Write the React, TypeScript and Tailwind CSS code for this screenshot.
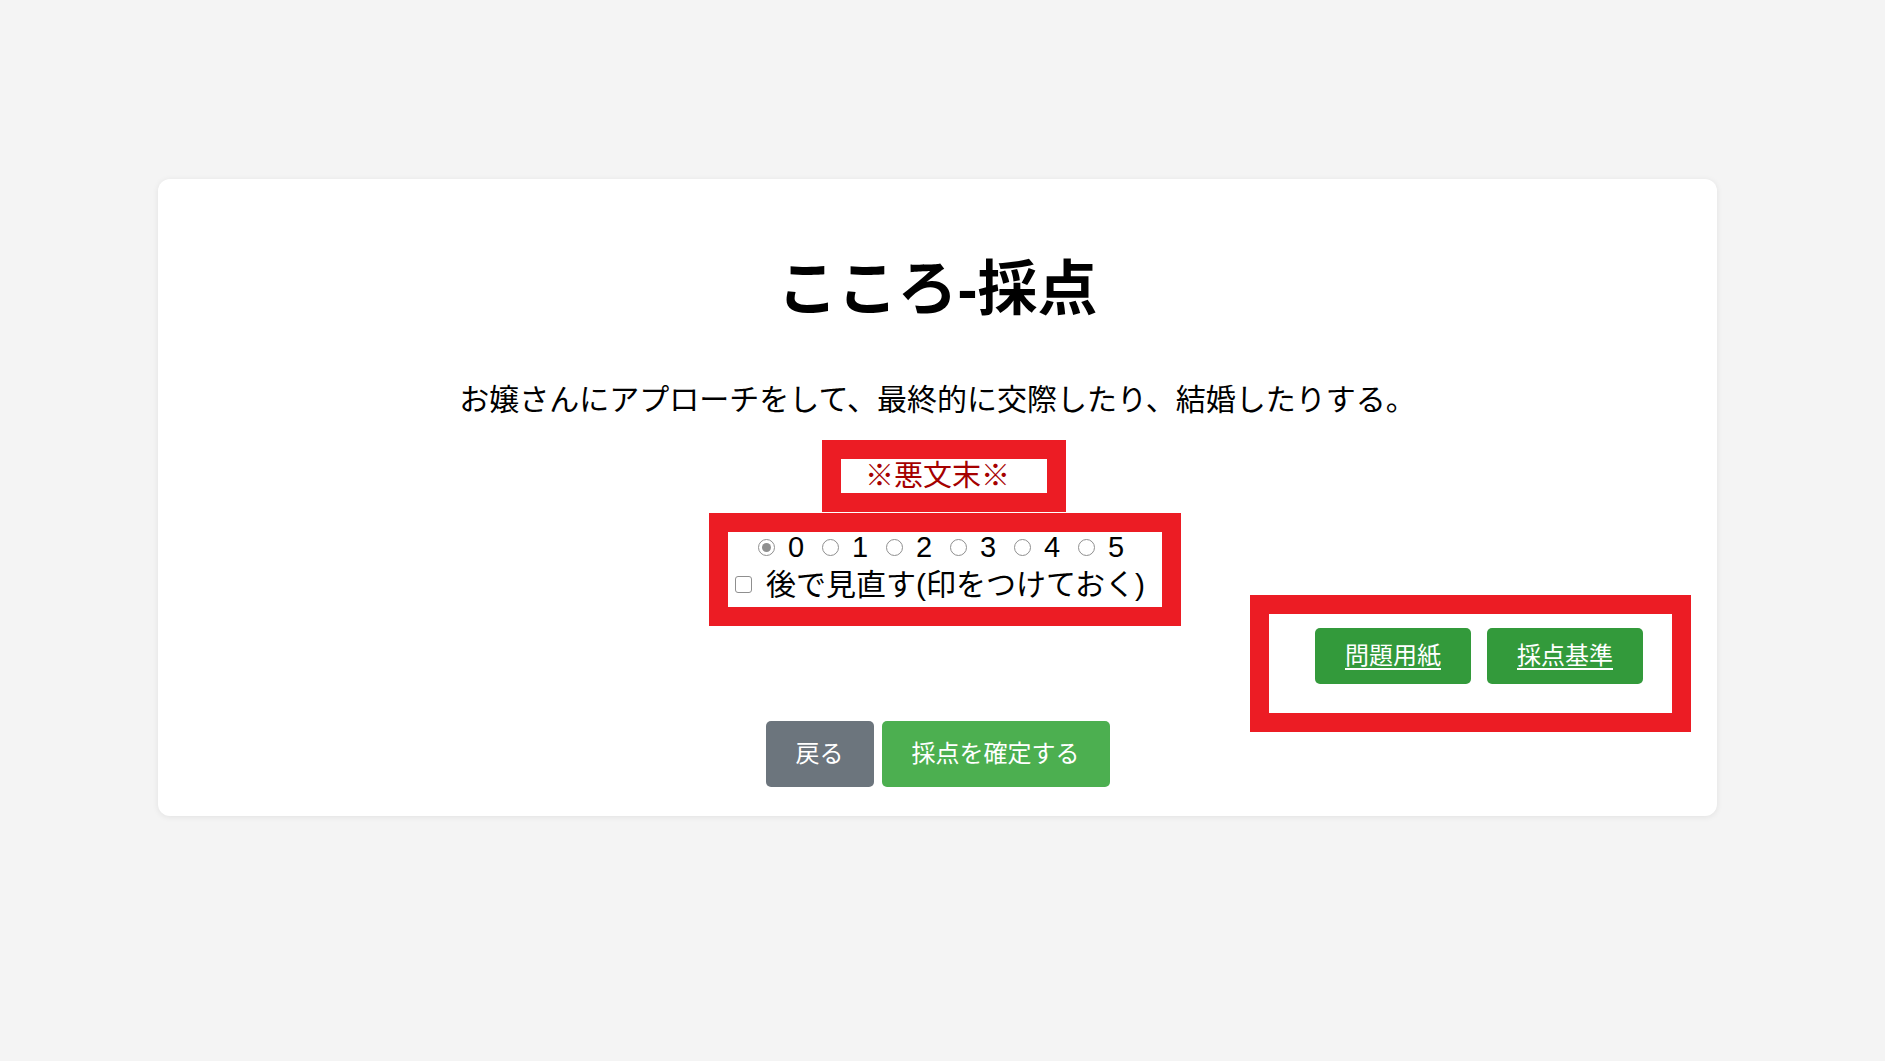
import { useState } from 'react';

const FONT = { fontFamily: '"Liberation Sans", "Noto Sans CJK JP", sans-serif' };

function Radio({ checked }: { checked: boolean }) {
  return (
    <span className="flex h-[17px] w-[17px] items-center justify-center rounded-full border border-[#8f8f8f] bg-white">
      {checked && <span className="h-[9px] w-[9px] rounded-full bg-[#8f8f8f]" />}
    </span>
  );
}

export default function App() {
  const [score, setScore] = useState(0);
  const [later, setLater] = useState(false);

  return (
    <div className="min-h-[1061px] bg-[#f4f4f4] pt-[179px] text-black" style={FONT}>
      <div className="ml-[158px] flex h-[637px] w-[1559px] flex-col items-center rounded-[12px] bg-white shadow-[0_1px_6px_rgba(0,0,0,0.08)]">
        {/* タイトル */}
        <h1 className="mt-[71px] text-[60px] font-bold leading-[80px]">こころ-採点</h1>

        <p className="mt-[49px] text-[30px] leading-[42px]">
          お嬢さんにアプローチをして、最終的に交際したり、結婚したりする。
        </p>

        {/* 悪文末 */}
        <div className="ml-[13px] mt-[19px] border-[19px] border-[#ec1c24]">
          <div className="flex h-[34px] w-[206px] items-center pl-[24px] text-[29px] leading-none text-[#a50000]">
            ※悪文末※
          </div>
        </div>

        {/* 採点 */}
        <div className="ml-[15px] mt-px border-[19px] border-[#ec1c24]">
          <div className="flex w-[434px] flex-col items-center text-[29px]">
            <div className="flex h-[30px] items-center pr-[8px]">
              {[0, 1, 2, 3, 4, 5].map((n) => (
                <label
                  key={n}
                  className="mr-[18px] flex items-center last:mr-0"
                  onClick={() => setScore(n)}
                >
                  <Radio checked={score === n} />
                  <span className="ml-[13px] w-[16px] leading-none">{n}</span>
                </label>
              ))}
            </div>
            <label
              className="flex h-[45px] items-center pr-[10px]"
              onClick={() => setLater(!later)}
            >
              <span className="h-[17px] w-[17px] rounded-[3px] border border-[#8f8f8f] bg-white" />
              <span className="ml-[14px] text-[30px] leading-none">後で見直す(印をつけておく)</span>
            </label>
          </div>
        </div>

        {/* 資料ボタン */}
        <div className="mt-[2px] flex w-full justify-end pr-[74px]">
          <div className="relative flex gap-[16px]">
            <div className="pointer-events-none absolute -bottom-[48px] -left-[65px] -right-[48px] -top-[33px] border-[19px] border-[#ec1c24]" />
            <button className="h-[56px] w-[156px] rounded-[5px] bg-[#339a3b] text-[24px] text-white underline underline-offset-[4px]">
              問題用紙
            </button>
            <button className="h-[56px] w-[156px] rounded-[5px] bg-[#339a3b] text-[24px] text-white underline underline-offset-[4px]">
              採点基準
            </button>
          </div>
        </div>

        {/* 送信 */}
        <div className="mt-[37px] flex gap-[8px]">
          <button className="h-[66px] rounded-[5px] bg-[#6c757d] px-[30px] text-[24px] text-white">
            戻る
          </button>
          <button className="h-[66px] rounded-[5px] bg-[#4caf50] px-[30px] text-[24px] text-white">
            採点を確定する
          </button>
        </div>
      </div>
    </div>
  );
}
